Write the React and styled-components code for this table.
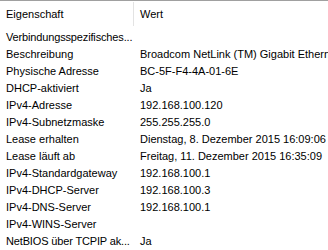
import React from "react";
import styled, { createGlobalStyle } from "styled-components";

const Global = createGlobalStyle`
  html, body { margin: 0; padding: 0; background: #ffffff; }
  body { font-family: "Liberation Sans", Arial, sans-serif; font-size: 11px; color: #000; }
`;

const Panel = styled.div`
  width: 328px;
  height: 250px;
  overflow: hidden;
  background: #fff;
  border-top: 1px solid #a0a0a0;
  box-sizing: border-box;
`;

const Header = styled.div`
  display: grid;
  grid-template-columns: 133px 1px 1fr;
  height: 25px;
  align-items: center;
`;

const HeaderCell = styled.div`
  padding-left: ${(p) => p.$pad}px;
  white-space: nowrap;
`;

const Divider = styled.div`
  align-self: stretch;
  margin: 1px 0 0 0;
  background: #e3e3e3;
`;

const List = styled.div`
  padding-top: 3px;
`;

const Row = styled.div`
  display: grid;
  grid-template-columns: 134px 1fr;
  height: 17px;
  line-height: 17px;
`;

const Cell = styled.div`
  padding-left: 6px;
  white-space: nowrap;
  overflow: ${(p) => (p.$clip ? "hidden" : "visible")};
  letter-spacing: ${(p) => (p.$tight ? "-0.15px" : "normal")};
`;

const rows = [
  ["Verbindungsspezifisches...", ""],
  ["Beschreibung", "Broadcom NetLink (TM) Gigabit Ethernet"],
  ["Physische Adresse", "BC-5F-F4-4A-01-6E"],
  ["DHCP-aktiviert", "Ja"],
  ["IPv4-Adresse", "192.168.100.120"],
  ["IPv4-Subnetzmaske", "255.255.255.0"],
  ["Lease erhalten", "Dienstag, 8. Dezember 2015 16:09:06"],
  ["Lease läuft ab", "Freitag, 11. Dezember 2015 16:35:09"],
  ["IPv4-Standardgateway", "192.168.100.1"],
  ["IPv4-DHCP-Server", "192.168.100.3"],
  ["IPv4-DNS-Server", "192.168.100.1"],
  ["IPv4-WINS-Server", ""],
  ["NetBIOS über TCPIP ak...", "Ja"],
];

export default function App() {
  return (
    <>
      <Global />
      <Panel>
        <Header>
          <HeaderCell $pad={6}>Eigenschaft</HeaderCell>
          <Divider />
          <HeaderCell $pad={6}>Wert</HeaderCell>
        </Header>
        <List>
          {rows.map(([k, v]) => (
            <Row key={k}>
              <Cell $tight={k.endsWith("...")}>{k}</Cell>
              <Cell $clip>{v}</Cell>
            </Row>
          ))}
        </List>
      </Panel>
    </>
  );
}
